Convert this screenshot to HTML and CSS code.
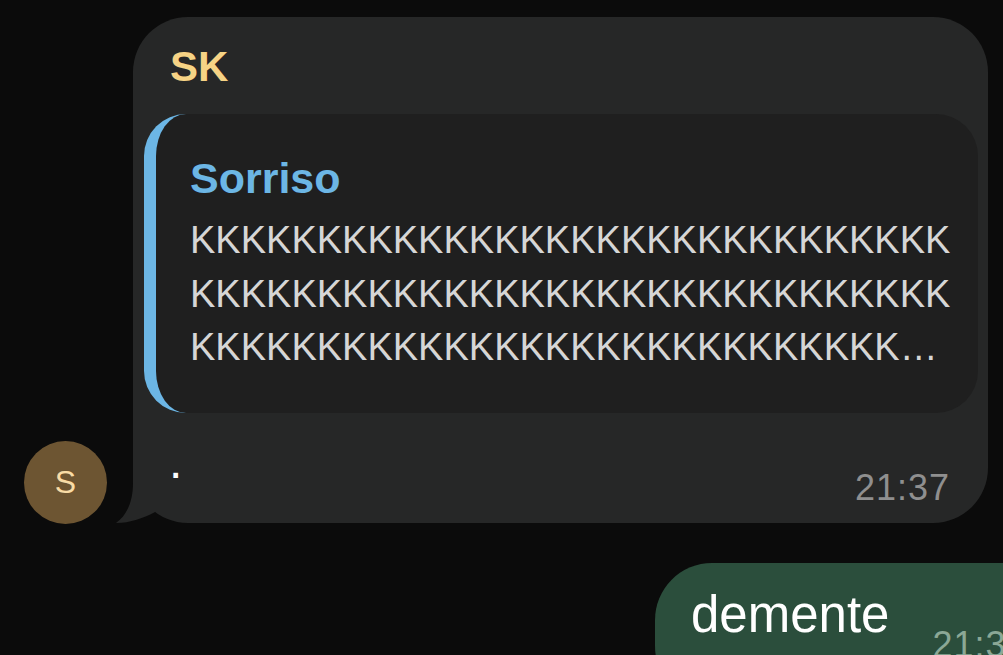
FILE: index.html
```html
<!DOCTYPE html>
<html lang="pt">
<head>
<meta charset="utf-8">
<title>Chat</title>
<link rel="stylesheet" href="styles.css">
</head>
<body>
<div class="chat">
  <div class="row incoming">
    <div class="avatar">S</div>
    <div class="bubble">
      <svg class="tail" width="60" height="70" viewBox="0 0 60 70" aria-hidden="true">
        <path d="M17,0 L17,30 C17,50 10,63 0,70 C14,70 28,65 39,59 L39,0 Z" fill="#262727"/>
      </svg>
      <div class="name">SK</div>
      <div class="reply">
        <div class="reply-title">Sorriso</div>
        <div class="reply-line">KKKKKKKKKKKKKKKKKKKKKKKKKKKKKK</div>
        <div class="reply-line">KKKKKKKKKKKKKKKKKKKKKKKKKKKKKK</div>
        <div class="reply-line">KKKKKKKKKKKKKKKKKKKKKKKKKKKK…</div>
      </div>
      <div class="footer">
        <span class="text">.</span>
        <span class="time">21:37</span>
      </div>
    </div>
  </div>
  <div class="row outgoing">
    <div class="bubble-out">
      <span class="text-out">demente</span>
      <span class="time-out">21:37</span>
    </div>
  </div>
</div>
</body>
</html>
```
FILE: styles.css
```css
* { box-sizing: border-box; }

html, body {
  margin: 0;
  padding: 0;
  background: #0b0b0b;
  height: 655px;
  overflow: hidden;
  font-family: "Liberation Sans", Arial, sans-serif;
}

.chat {
  display: flex;
  flex-direction: column;
  padding-top: 17px;
}

.row {
  display: flex;
}

.incoming {
  align-items: flex-end;
  padding-left: 24px;
  gap: 26px;
}

.avatar {
  width: 83px;
  height: 83px;
  border-radius: 50%;
  background: #6d5532;
  color: #f9dca6;
  font-size: 32px;
  display: flex;
  align-items: center;
  justify-content: center;
  margin-bottom: -1px;
  flex-shrink: 0;
}

.bubble {
  position: relative;
  width: 855px;
  background: #262727;
  border-radius: 55px;
  padding: 25px 10px 15.5px 11px;
}

.tail {
  position: absolute;
  left: -17px;
  bottom: 0;
  display: block;
}

.name {
  position: relative;
  font-size: 42px;
  line-height: 50px;
  font-weight: bold;
  color: #f6d385;
  padding-left: 26px;
}

.reply {
  margin-top: 22px;
  background: #1f1f1f;
  border-left: 12px solid #6cb6e5;
  border-radius: 42px;
  padding: 38px 20px 38.5px 34px;
}

.reply-title {
  font-size: 43px;
  line-height: 52px;
  font-weight: bold;
  color: #6cb6e5;
}

.reply-line {
  font-size: 38px;
  line-height: 53.5px;
  color: #d6d6d6;
  white-space: nowrap;
}

.reply-title + .reply-line {
  margin-top: 10px;
}

.footer {
  position: relative;
  display: flex;
  justify-content: space-between;
  align-items: flex-start;
  margin-top: 21.5px;
  padding: 0 28px 0 25px;
}

.text {
  font-size: 48px;
  line-height: 53.5px;
  color: #ffffff;
}

.time {
  margin-top: 33px;
  font-size: 36px;
  line-height: 40px;
  letter-spacing: 1px;
  color: #8f8f8f;
}

.outgoing {
  justify-content: flex-end;
  margin-top: 40px;
}

.bubble-out {
  width: 410px;
  margin-right: -62px;
  height: 140px;
  background: #2b4e3c;
  border-radius: 57px;
  padding: 22px 0 0 36px;
  display: flex;
  align-items: flex-start;
  gap: 43px;
  flex-shrink: 0;
}

.text-out {
  font-size: 51px;
  line-height: 60px;
  color: #ffffff;
}

.time-out {
  margin-top: 40px;
  font-size: 36px;
  line-height: 40px;
  letter-spacing: 1px;
  color: #8ba896;
}
```
